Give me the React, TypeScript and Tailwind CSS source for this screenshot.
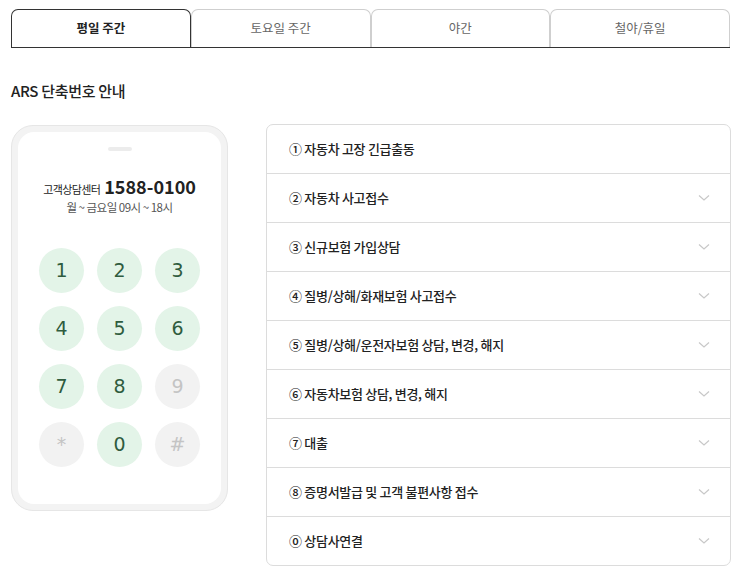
import React, { useState } from 'react';

const tabs = ['평일 주간', '토요일 주간', '야간', '철야/휴일'];

const menus = [
  '① 자동차 고장 긴급출동',
  '② 자동차 사고접수',
  '③ 신규보험 가입상담',
  '④ 질병/상해/화재보험 사고접수',
  '⑤ 질병/상해/운전자보험 상담, 변경, 해지',
  '⑥ 자동차보험 상담, 변경, 해지',
  '⑦ 대출',
  '⑧ 증명서발급 및 고객 불편사항 접수',
  '⓪ 상담사연결',
];

const keys = [
  { label: '1', on: true },
  { label: '2', on: true },
  { label: '3', on: true },
  { label: '4', on: true },
  { label: '5', on: true },
  { label: '6', on: true },
  { label: '7', on: true },
  { label: '8', on: true },
  { label: '9', on: false },
  { label: '*', on: false },
  { label: '0', on: true },
  { label: '#', on: false },
];

function Chevron() {
  return (
    <svg width="12" height="8" viewBox="0 0 12 8" fill="none">
      <path d="M1 1.5L6 6L11 1.5" stroke="#c8c8c8" strokeWidth="1.2" />
    </svg>
  );
}

export default function App() {
  const [activeTab, setActiveTab] = useState(0);

  return (
    <div className="w-[738px] h-[579px] bg-white px-[11px] pt-[9px] font-['Noto_Sans_CJK_KR','Noto_Sans',sans-serif] text-[#222]">
      {/* Tabs */}
      <div className="flex w-[719px] border-b border-[#333]">
        {tabs.map((tab, i) => (
          <button
            key={tab}
            onClick={() => setActiveTab(i)}
            className={`flex-1 h-[38px] rounded-t-[7px] border border-b-0 text-[12.5px] leading-none ${
              activeTab === i
                ? 'border-[#333] font-bold text-[#222]'
                : 'border-[#cfcfcf] text-[#666]'
            }`}
          >
            {tab}
          </button>
        ))}
      </div>

      <h2 className="mt-[33px] text-[15px] font-medium leading-[20px] tracking-[-0.3px]">ARS 단축번호 안내</h2>

      <div className="flex gap-[38px] mt-[23px]">
        {/* Phone */}
        <div className="shrink-0 w-[217px] h-[386px] mt-[1px] rounded-[22px] border border-[#e6e6e6] bg-[#f3f3f3] p-[6px]">
          <div className="h-full rounded-[16px] bg-white flex flex-col items-center">
            <div className="mt-[15px] w-[24px] h-[4px] rounded-full bg-[#ececec]" />
            <div className="mt-[24px] flex items-baseline gap-[4px]">
              <span className="text-[11px] tracking-[-0.6px] text-[#222]">고객상담센터</span>
              <span className="text-[18px] font-bold leading-[22px] text-[#222]">1588-0100</span>
            </div>
            <div className="mt-[1px] text-[11.5px] tracking-[-0.5px] text-[#555]">월 ~ 금요일 09시 ~ 18시</div>
            <div className="mt-[32px] grid grid-cols-3 gap-x-[13px] gap-y-[13px]">
              {keys.map((k) => (
                <div
                  key={k.label}
                  className={`w-[45px] h-[45px] rounded-full flex items-center justify-center text-[19px] font-['DejaVu_Sans',sans-serif] ${
                    k.on ? 'bg-[#e3f4e8] text-[#2f5c3e]' : 'bg-[#f2f2f2] text-[#c4c4c4]'
                  } ${k.label === '*' || k.label === '#' ? 'text-[15px]' : ''}`}
                >
                  {k.label}
                </div>
              ))}
            </div>
          </div>
        </div>

        {/* Menu list */}
        <div className="shrink-0 w-[465px] rounded-[7px] border border-[#dcdcdc] overflow-hidden">
          {menus.map((m, i) => (
            <div
              key={m}
              className={`flex items-center justify-between pl-[22px] pr-[20px] ${
                i > 0 ? 'h-[49px] border-t border-[#dcdcdc]' : 'h-[48px]'
              }`}
            >
              <span className="text-[13px] font-medium tracking-[-0.3px] text-[#222]">{m}</span>
              {i > 0 && <Chevron />}
            </div>
          ))}
        </div>
      </div>
    </div>
  );
}
